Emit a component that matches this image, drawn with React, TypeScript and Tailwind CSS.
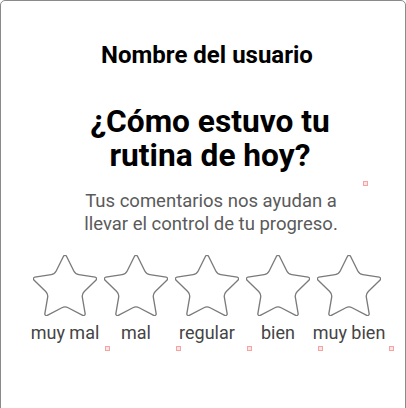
import React from 'react';

const RATINGS = ['muy mal', 'mal', 'regular', 'bien', 'muy bien'];

const StarOutline: React.FC = () => (
  <svg width="64" height="61" viewBox="2 1.9 20 19.3" fill="none" stroke="#7a7a7a" strokeWidth="0.42" strokeLinejoin="round" strokeLinecap="round">
    <path d="M11.525 2.295a.53.53 0 0 1 .95 0l2.31 4.679a2.123 2.123 0 0 0 1.595 1.16l5.166.756a.53.53 0 0 1 .294.904l-3.736 3.638a2.123 2.123 0 0 0-.611 1.878l.882 5.14a.53.53 0 0 1-.771.56l-4.618-2.428a2.122 2.122 0 0 0-1.973 0L6.396 21.01a.53.53 0 0 1-.77-.56l.881-5.139a2.122 2.122 0 0 0-.611-1.879L2.16 9.795a.53.53 0 0 1 .294-.906l5.165-.755a2.122 2.122 0 0 0 1.597-1.16z" />
  </svg>
);

// faint marker boxes seen in the capture
const Marker: React.FC<{ className?: string }> = ({ className = '' }) => (
  <span className={`absolute w-[5px] h-[5px] border border-[#f5a3a3] bg-[#fde4e4] ${className}`} />
);

export default function App() {
  return (
    <div className="w-[406px] h-[408px] overflow-hidden bg-white" style={{ fontFamily: 'Roboto, "Noto Sans", sans-serif' }}>
      <div className="relative min-h-[430px] border border-[#8a8a8a] rounded-t-[5px] bg-white flex flex-col items-center pt-[40px] pl-[8px]">
        <h1 className="text-[24px] leading-[28px] font-bold text-black">Nombre del usuario</h1>

        <h2 className="mt-[35px] ml-[6px] text-[31.7px] leading-[35px] font-bold text-black text-center">
          <span className="block">¿Cómo estuvo tu</span>
          <span className="block -mt-[1px]">rutina de hoy?</span>
        </h2>

        <div className="relative w-full flex justify-center">
          <Marker className="right-[37px] top-[8px]" />
          <p className="mt-[17px] ml-[8px] text-[18.5px] leading-[23px] text-[#5a5a5a] text-center">
            Tus comentarios nos ayudan a
            <br />
            llevar el control de tu progreso.
          </p>
        </div>

        <div className="mt-[19px] flex">
          {RATINGS.map((label) => (
            <div key={label} className="relative w-[71px] flex flex-col items-center">
              <StarOutline />
              <span className="mt-[5px] text-[18px] leading-[24px] text-[#444] whitespace-nowrap">{label}</span>
              <Marker className="right-[-9px] top-[91px]" />
            </div>
          ))}
        </div>
      </div>
    </div>
  );
}
